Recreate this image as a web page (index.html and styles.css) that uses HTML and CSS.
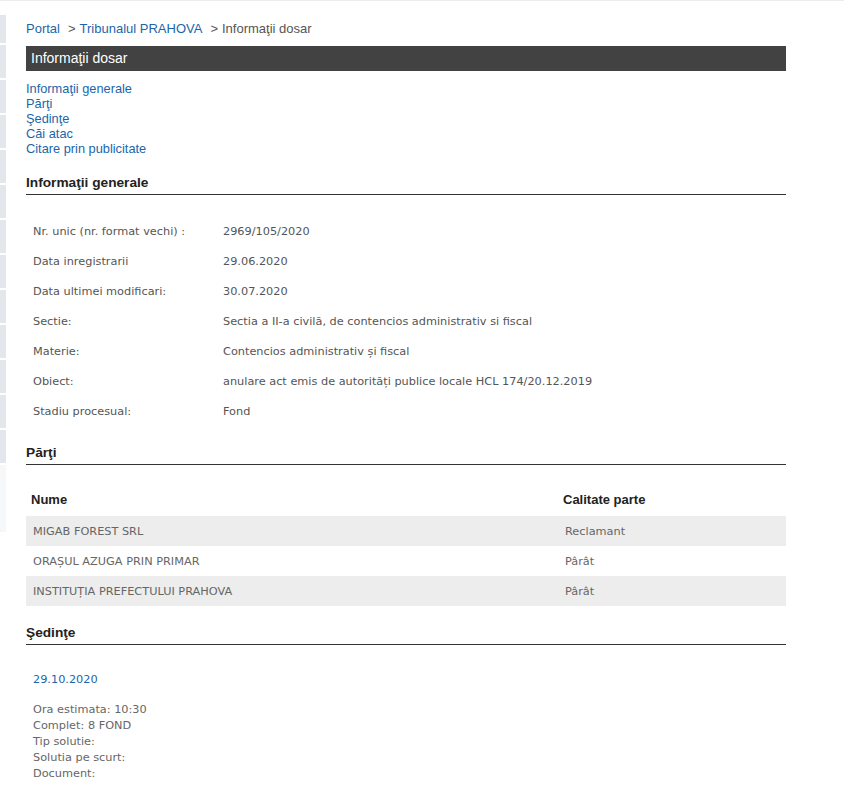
FILE: index.html
```html
<!DOCTYPE html>
<html lang="ro">
<head>
<meta charset="utf-8">
<title>Informaţii dosar</title>
<link rel="stylesheet" href="styles.css">
</head>
<body>
<div class="topline"></div>
<div class="layout">
  <div class="sidebar">
    <div class="tab first"></div>
    <div class="tab"></div>
    <div class="tab"></div>
    <div class="tab"></div>
    <div class="tab"></div>
    <div class="tab"></div>
    <div class="tab"></div>
    <div class="tab"></div>
    <div class="tab"></div>
    <div class="tab"></div>
    <div class="tab"></div>
    <div class="tab"></div>
    <div class="tab"></div>
    <div class="tab faint"></div>
  </div>
  <main class="main">
    <nav class="breadcrumb">
      <a href="#">Portal</a><span class="sep">&gt;</span><a href="#">Tribunalul PRAHOVA</a><span class="sep">&gt;</span><span class="current">Informaţii dosar</span>
    </nav>
    <div class="titlebar">Informaţii dosar</div>
    <ul class="toc">
      <li><a href="#">Informaţii generale</a></li>
      <li><a href="#">Părţi</a></li>
      <li><a href="#">Şedinţe</a></li>
      <li><a href="#">Căi atac</a></li>
      <li><a href="#">Citare prin publicitate</a></li>
    </ul>

    <h2 class="section-title">Informaţii generale</h2>
    <table class="info">
      <tr><td class="label">Nr. unic (nr. format vechi) :</td><td>2969/105/2020</td></tr>
      <tr><td class="label">Data inregistrarii</td><td>29.06.2020</td></tr>
      <tr><td class="label">Data ultimei modificari:</td><td>30.07.2020</td></tr>
      <tr><td class="label">Sectie:</td><td>Sectia a II-a civilă, de contencios administrativ si fiscal</td></tr>
      <tr><td class="label">Materie:</td><td>Contencios administrativ și fiscal</td></tr>
      <tr><td class="label">Obiect:</td><td>anulare act emis de autorități publice locale HCL 174/20.12.2019</td></tr>
      <tr><td class="label">Stadiu procesual:</td><td>Fond</td></tr>
    </table>

    <h2 class="section-title">Părţi</h2>
    <table class="parties">
      <thead>
        <tr><th class="col-name">Nume</th><th>Calitate parte</th></tr>
      </thead>
      <tbody>
        <tr class="alt"><td>MIGAB FOREST SRL</td><td>Reclamant</td></tr>
        <tr><td>ORAȘUL AZUGA PRIN PRIMAR</td><td>Pârât</td></tr>
        <tr class="alt"><td>INSTITUȚIA PREFECTULUI PRAHOVA</td><td>Pârât</td></tr>
      </tbody>
    </table>

    <h2 class="section-title">Şedinţe</h2>
    <div class="hearing">
      <div class="hearing-date">29.10.2020</div>
      <div class="hearing-details">
        <div>Ora estimata: 10:30</div>
        <div>Complet: 8 FOND</div>
        <div>Tip solutie:</div>
        <div>Solutia pe scurt:</div>
        <div>Document:</div>
      </div>
    </div>
  </main>
</div>
</body>
</html>
```

FILE: styles.css
```css
html, body {
  margin: 0;
  padding: 0;
  background: #ffffff;
}

body {
  font-family: "Liberation Sans", Arial, sans-serif;
  color: #333333;
}

a {
  color: #1d65aa;
  text-decoration: none;
}

.topline {
  height: 1px;
  background: #ececec;
}

.layout {
  display: flex;
  align-items: flex-start;
}

.sidebar {
  width: 6px;
  flex: 0 0 6px;
  display: flex;
  flex-direction: column;
  gap: 2px;
  padding-top: 14px;
}

.tab {
  height: 33px;
  background: #e3e6ea;
}

.tab.first {
  height: 28px;
}

.tab.faint {
  height: 67px;
  background: #f6f7f8;
}

.main {
  width: 760px;
  margin-left: 20px;
}

.breadcrumb {
  font-size: 13px;
  line-height: 16px;
  padding-top: 20px;
  height: 26px;
  box-sizing: border-box;
  white-space: nowrap;
}

.breadcrumb .sep {
  color: #555555;
  margin: 0 4px 0 8px;
}

.breadcrumb .current {
  color: #555555;
}

.titlebar {
  margin-top: 19px;
  height: 25px;
  background: #424242;
  color: #ffffff;
  font-size: 14px;
  line-height: 25px;
  padding-left: 5px;
}

.toc {
  list-style: none;
  margin: 10px 0 0 0;
  padding: 0;
  font-size: 12.8px;
  line-height: 15px;
}

.section-title {
  margin: 19px 0 0 0;
  font-size: 13.7px;
  line-height: 16px;
  font-weight: bold;
  color: #222222;
  padding-bottom: 3px;
  border-bottom: 1px solid #333333;
}

.info,
.parties {
  width: 100%;
  border-collapse: collapse;
  margin-top: 21px;
  font-family: "DejaVu Sans", Verdana, sans-serif;
  font-size: 11.3px;
}

.info td {
  height: 30px;
  padding: 0 0 0 7px;
  color: #555555;
  vertical-align: middle;
}

.info td.label {
  width: 183px;
}

.parties th {
  font-family: "Liberation Sans", Arial, sans-serif;
  font-size: 13px;
  font-weight: bold;
  color: #222222;
  text-align: left;
  height: 30px;
  padding: 0 0 4px 5px;
  box-sizing: border-box;
  vertical-align: middle;
}

.parties th.col-name {
  width: 532px;
}

.parties td {
  height: 30px;
  padding: 0 0 0 7px;
  color: #666666;
  vertical-align: middle;
}

.parties tr.alt td {
  background: #ededed;
}

.hearing {
  padding-left: 7px;
  font-family: "DejaVu Sans", Verdana, sans-serif;
  font-size: 11.3px;
}

.hearing-date {
  margin-top: 27px;
  line-height: 16px;
  color: #1d65aa;
}

.hearing-details {
  margin-top: 14px;
  line-height: 16px;
  color: #666666;
}
```
